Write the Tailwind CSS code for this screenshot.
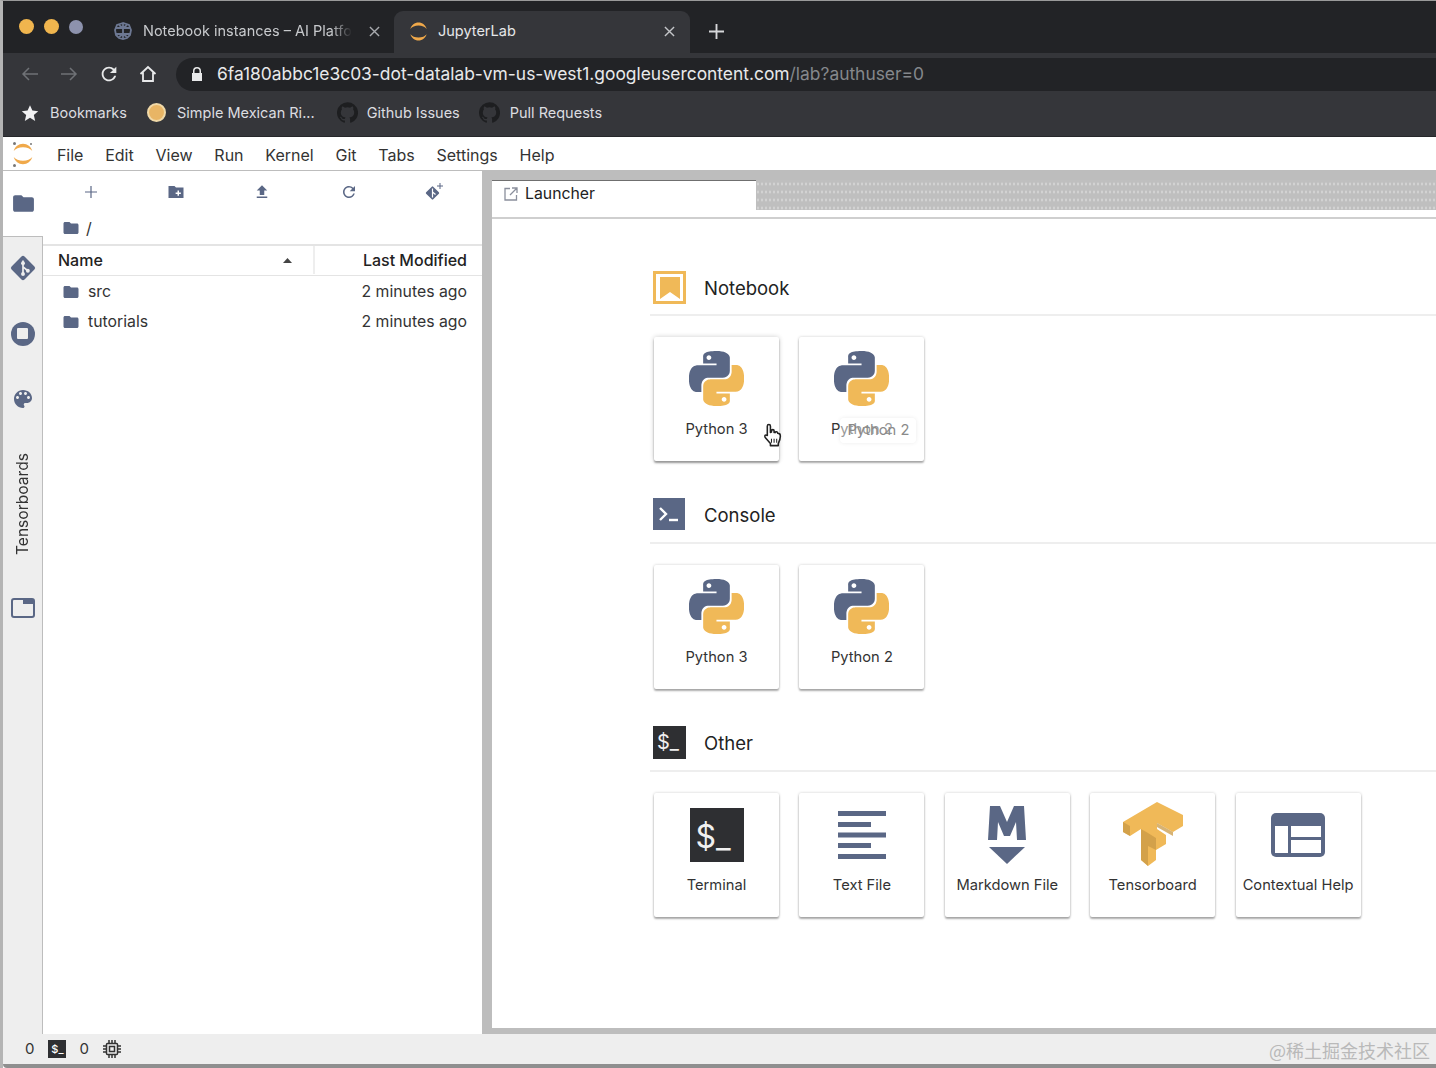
<!DOCTYPE html>
<html lang="en">
<head>
  <meta charset="UTF-8">
  <title>JupyterLab</title>
  <script src="https://cdn.jsdelivr.net/npm/@tailwindcss/browser@4"></script>
</head>
<body class="[font-family:Inter,sans-serif] text-[#222]">

  <!-- shared icons -->
  <svg class="hidden" xmlns="http://www.w3.org/2000/svg">
    <symbol id="folder" viewBox="0 0 24 24"><path d="M10 4H4c-1.1 0-2 .9-2 2v12c0 1.1.9 2 2 2h16c1.1 0 2-.9 2-2V8c0-1.1-.9-2-2-2h-8l-2-2z"/></symbol>
    <symbol id="python" viewBox="0 0 24 24">
      <path fill="#5a6785" d="M14.25.18l.9.2.73.26.59.3.45.32.34.34.25.34.16.33.1.3.04.26.02.2-.01.13V8.5l-.05.63-.13.55-.21.46-.26.38-.3.31-.33.25-.35.19-.35.14-.33.1-.3.07-.26.04-.21.02H8.77l-.69.05-.59.14-.5.22-.41.27-.33.32-.27.35-.2.36-.15.37-.1.35-.07.32-.04.27-.02.21v3.06H3.17l-.21-.03-.28-.07-.32-.12-.35-.18-.36-.26-.36-.36-.35-.46-.32-.59-.28-.73-.21-.88-.14-1.05-.05-1.23.06-1.22.16-1.04.24-.87.32-.71.36-.57.4-.44.42-.33.42-.24.4-.16.36-.1.32-.05.24-.01h.16l.06.01h8.16v-.83H6.18l-.01-2.75-.02-.37.05-.34.11-.31.17-.28.25-.26.31-.23.38-.2.44-.18.51-.15.58-.12.64-.1.71-.06.77-.04.84-.02 1.27.05zm-6.3 1.98l-.23.33-.08.41.08.41.23.34.33.22.41.09.41-.09.33-.22.23-.34.08-.41-.08-.41-.23-.33-.33-.22-.41-.09-.41.09z"/>
      <path fill="#f0b958" d="M21.04 6.11l.28.06.32.12.35.18.36.27.36.35.35.47.32.59.28.73.21.88.14 1.04.05 1.23-.06 1.23-.16 1.04-.24.86-.32.71-.36.57-.4.45-.42.33-.42.24-.4.16-.36.09-.32.05-.24.02-.16-.01h-8.22v.82h5.84l.01 2.76.02.36-.05.34-.11.31-.17.29-.25.25-.31.24-.38.2-.44.17-.51.15-.58.13-.64.09-.71.07-.77.04-.84.01-1.27-.04-1.07-.14-.9-.2-.73-.25-.59-.3-.45-.33-.34-.34-.25-.34-.16-.33-.1-.3-.04-.25-.02-.2.01-.13v-5.34l.05-.64.13-.54.21-.46.26-.38.3-.32.33-.24.35-.2.35-.14.33-.1.3-.06.26-.04.21-.02.13-.01h5.84l.69-.05.59-.14.5-.21.41-.28.33-.32.27-.35.2-.36.15-.36.1-.35.07-.32.04-.28.02-.21V6.07h2.09l.14.01zm-6.47 14.25l-.23.33-.08.41.08.41.23.33.33.23.41.08.41-.08.33-.23.23-.33.08-.41-.08-.41-.23-.33-.33-.23-.41-.08-.41.08z"/>
    </symbol>
    <symbol id="github" viewBox="0 0 24 24"><path d="M12 .3a12 12 0 0 0-3.8 23.38c.6.12.83-.26.83-.57v-2.02c-3.34.72-4.04-1.61-4.04-1.61-.55-1.39-1.33-1.76-1.33-1.76-1.09-.74.08-.73.08-.73 1.2.09 1.84 1.24 1.84 1.24 1.07 1.83 2.81 1.3 3.5 1 .1-.78.42-1.31.76-1.61-2.67-.3-5.47-1.33-5.47-5.93 0-1.31.47-2.38 1.24-3.22-.14-.3-.54-1.52.1-3.18 0 0 1-.32 3.3 1.23a11.5 11.5 0 0 1 6 0c2.28-1.55 3.29-1.23 3.29-1.23.64 1.66.24 2.88.12 3.18a4.65 4.65 0 0 1 1.23 3.22c0 4.61-2.8 5.63-5.48 5.92.42.36.81 1.1.81 2.22v3.29c0 .32.22.69.83.57A12 12 0 0 0 12 .3"/></symbol>
    <symbol id="jupyter" viewBox="0 0 24 24">
      <path fill="#f0a94a" d="M12 5.2c-4 0-7.6 1.5-9.3 3.8C3.9 4.8 7.6 1.8 12 1.8s8.100 3 9.300 7.200C19.600 6.700 16 5.200 12 5.200z"/>
      <path fill="#f0a94a" d="M12 18.800c4 0 7.600-1.500 9.300-3.800-1.200 4.200-4.900 7.200-9.300 7.200s-8.100-3-9.300-7.200c1.700 2.300 5.300 3.800 9.300 3.800z"/>
    </symbol>
  </svg>

  <div class="w-[1436px] h-[1068px] overflow-hidden flex flex-col border-l-[3px] border-t border-l-[#b4b4b4] border-t-[#9a9a9a] bg-white">

    <!-- Tab strip -->
    <div class="h-[52px] shrink-0 bg-[#222326] flex items-end text-[14.500px] text-[#c8cacd]">
      <div class="flex gap-[10px] items-center w-[105px] h-full pb-[1px] pl-[16px]">
        <span class="w-[15px] h-[15px] rounded-full bg-[#f0b54e]"></span>
        <span class="w-[15px] h-[15px] rounded-full bg-[#f0b54e]"></span>
        <span class="w-[14px] h-[14px] rounded-full bg-[#8d92ad]"></span>
      </div>
      <div class="w-[286px] h-[42px] flex items-center pl-[5px] pr-[14px] pb-[2px]">
        <svg class="w-[20px] h-[20px] mr-[10px] shrink-0" viewBox="0 0 20 20" fill="none" stroke="#6d7893" stroke-width="1.800">
          <path d="M10 2L4 4 2 9l1 5 3 3 4 1 4-1 3-3 1-5-2-5z"/><path d="M10 2v16M3 7h14M3 13h14M6 4l4 3 4-3M6 16l4-3 4 3"/>
        </svg>
        <span class="whitespace-nowrap [mask-image:linear-gradient(to_right,black_90%,transparent)]">Notebook instances – AI Platfo</span>
        <svg class="w-[11px] h-[11px] ml-auto" viewBox="0 0 12 12" stroke="#a8aaae" stroke-width="1.500"><path d="M1 1l10 10M11 1L1 11"/></svg>
      </div>
      <div class="w-[296px] h-[42px] bg-[#35363a] rounded-t-[9px] flex items-center pl-[14px] pr-[15px] pb-[2px] text-[#e6e7e9]">
        <svg class="w-[21px] h-[21px] mr-[9px] shrink-0"><use href="#jupyter"/></svg>
        <span>JupyterLab</span>
        <svg class="w-[11px] h-[11px] ml-auto" viewBox="0 0 12 12" stroke="#c4c6c9" stroke-width="1.500"><path d="M1 1l10 10M11 1L1 11"/></svg>
      </div>
      <div class="h-[42px] flex items-center pl-[19px] pb-[2px]">
        <svg class="w-[15px] h-[15px]" viewBox="0 0 16 16" stroke="#d6d7d9" stroke-width="2"><path d="M8 0v16M0 8h16"/></svg>
      </div>
    </div>

    <!-- Address bar -->
    <div class="h-[42px] shrink-0 bg-[#35363a] flex items-center">
      <svg class="w-[18px] h-[18px] ml-[18px]" viewBox="0 0 18 18" fill="none" stroke="#6f7276" stroke-width="1.500"><path d="M17 9H2M8 3L2 9l6 6"/></svg>
      <svg class="w-[18px] h-[18px] ml-[21px]" viewBox="0 0 18 18" fill="none" stroke="#6f7276" stroke-width="1.500"><path d="M1 9h15M10 3l6 6-6 6"/></svg>
      <svg class="w-[22px] h-[22px] ml-[20px]" viewBox="0 0 24 24" fill="#e8e9ea"><path d="M17.650 6.350A7.958 7.958 0 0012 4c-4.420 0-7.990 3.580-7.990 8s3.570 8 7.990 8c3.730 0 6.840-2.550 7.730-6h-2.080A5.990 5.990 0 0112 18c-3.310 0-6-2.690-6-6s2.690-6 6-6c1.660 0 3.140.690 4.220 1.780L13 11h7V4l-2.350 2.350z"/></svg>
      <svg class="w-[18px] h-[18px] ml-[19px]" viewBox="0 0 18 18" fill="none" stroke="#e8e9ea" stroke-width="1.800"><path d="M1.500 9L9 2l7.500 7M4 7.500V16h10V7.500"/></svg>
      <div class="ml-[19px] flex-1 h-[33px] bg-[#222326] rounded-l-full flex items-center pl-[15px] text-[17.400px] whitespace-nowrap">
        <svg class="w-[12px] h-[14px] mr-[14px]" viewBox="0 0 12 14" fill="#e8e9ea"><path d="M2 6V4a4 4 0 018 0v2h1v8H1V6zm1.500 0h5V4a2.500 2.500 0 00-5 0z"/></svg>
        <span class="text-[#e8e9ea]">6fa180abbc1e3c03-dot-datalab-vm-us-west1.googleusercontent.com</span><span class="text-[#85888c]">/lab?authuser=0</span>
      </div>
    </div>

    <!-- Bookmarks -->
    <div class="h-[42px] shrink-0 bg-[#35363a] flex items-center pb-[6px] text-[14.500px] text-[#dcdde0] border-b border-[#26272a]">
      <svg class="w-[18px] h-[18px] ml-[18px] mr-[11px]" viewBox="0 0 24 24" fill="#f1f1f2"><path d="M12 1.500l3.200 7.300 7.800.8-5.900 5.200 1.800 7.700L12 18.400l-6.900 4.100 1.800-7.700L1 9.600l7.800-.8z"/></svg>
      <span>Bookmarks</span>
      <span class="w-[19px] h-[19px] rounded-full bg-[#e8b565] border-2 border-[#f0d9a8] ml-[20px] mr-[11px]"></span>
      <span>Simple Mexican Ri...</span>
      <svg class="w-[21px] h-[21px] ml-[22px] mr-[9px] fill-[#1d1e20]"><use href="#github"/></svg>
      <span>Github Issues</span>
      <svg class="w-[21px] h-[21px] ml-[19px] mr-[10px] fill-[#1d1e20]"><use href="#github"/></svg>
      <span>Pull Requests</span>
    </div>

    <!-- Jupyter menu -->
    <div class="h-[34px] shrink-0 flex items-center text-[16px] text-[#333] border-b border-[#bdbdbd]">
      <div class="relative w-[43px] h-full flex items-center pl-[8px]">
        <svg class="w-[24px] h-[26px]"><use href="#jupyter"/></svg>
        <span class="absolute left-[10px] top-[5px] w-[3px] h-[3px] rounded-full bg-[#777]"></span>
        <span class="absolute left-[27px] top-[6px] w-[2px] h-[2px] rounded-full bg-[#777]"></span>
        <span class="absolute left-[10px] bottom-[3px] w-[3px] h-[3px] rounded-full bg-[#777]"></span>
      </div>
      <div class="flex pt-[3px]">
        <span class="px-[10.900px]">File</span><span class="px-[10.900px]">Edit</span><span class="px-[10.900px]">View</span><span class="px-[10.900px]">Run</span><span class="px-[10.900px]">Kernel</span><span class="px-[10.900px]">Git</span><span class="px-[10.900px]">Tabs</span><span class="px-[10.900px]">Settings</span><span class="px-[10.900px]">Help</span>
      </div>
    </div>

    <!-- Main area -->
    <div class="flex-1 min-h-0 flex bg-[#bdbdbd]">

      <!-- Side tabs -->
      <div class="w-[40px] shrink-0 bg-[#eeeeee] flex flex-col items-stretch fill-[#5a6785]">
        <div class="h-[65px] bg-white flex items-center justify-center">
          <svg class="w-[25px] h-[25px]"><use href="#folder"/></svg>
        </div>
        <div class="flex-1 flex flex-col border-r border-t border-[#bdbdbd]">
          <div class="h-[65px] flex items-center justify-center pb-[3px]">
            <svg class="w-[28px] h-[28px]" viewBox="0 0 26 26">
              <rect x="4.500" y="4.500" width="17" height="17" rx="2" transform="rotate(45 13 13)"/>
              <path d="M13 6v14M13 12l5 4" stroke="#eee" stroke-width="1.600" fill="none"/>
              <circle cx="13" cy="8.500" r="1.800" fill="#eee"/><circle cx="13" cy="18.500" r="1.800" fill="#eee"/><circle cx="17.500" cy="15.500" r="1.800" fill="#eee"/>
            </svg>
          </div>
          <div class="h-[65px] flex items-center justify-center pb-[2px]">
            <span class="w-[24px] h-[24px] rounded-full bg-[#5a6785] flex items-center justify-center"><span class="w-[11px] h-[11px] rounded-[1px] bg-[#eee]"></span></span>
          </div>
          <div class="h-[65px] flex items-center justify-center pb-[2px]">
            <svg class="w-[24px] h-[24px]" viewBox="0 0 24 24"><path d="M12 3c-4.970 0-9 4.030-9 9s4.030 9 9 9c.830 0 1.500-.670 1.500-1.500 0-.390-.150-.740-.390-1.010-.230-.260-.380-.610-.380-.990 0-.830.670-1.500 1.500-1.500H16c2.760 0 5-2.240 5-5 0-4.420-4.030-8-9-8zm-5.500 9c-.830 0-1.500-.670-1.500-1.500S5.670 9 6.500 9 8 9.670 8 10.500 7.330 12 6.500 12zm3-4C8.670 8 8 7.330 8 6.500S8.670 5 9.500 5s1.500.670 1.500 1.500S10.330 8 9.500 8zm5 0c-.830 0-1.500-.670-1.500-1.500S13.670 5 14.500 5s1.500.670 1.500 1.500S15.330 8 14.500 8zm3 4c-.830 0-1.500-.670-1.500-1.500S16.670 9 17.500 9s1.500.670 1.500 1.500-.670 1.500-1.500 1.500z"/></svg>
          </div>
          <div class="py-[21px] flex justify-center">
            <span class="[writing-mode:vertical-rl] rotate-180 text-[15.600px] leading-[20px] text-[#333]">Tensorboards</span>
          </div>
          <div class="h-[65px] flex items-center justify-center pb-[2px]">
            <svg class="w-[24px] h-[20px]" viewBox="0 0 24 20"><rect x="1" y="1" width="22" height="18" rx="2" fill="none" stroke="#5a6785" stroke-width="2"/><rect x="12" y="1" width="11" height="5"/></svg>
          </div>
        </div>
      </div>

      <!-- File browser -->
      <div class="w-[439px] shrink-0 bg-white flex flex-col text-[15.800px] text-[#333]">
        <div class="h-[41px] flex items-center px-[5px] fill-[#5a6785]">
          <div class="flex-1 flex justify-center"><svg class="w-[12px] h-[12px]" viewBox="0 0 12 12" stroke="#5a6785" stroke-width="1.200"><path d="M6 0v12M0 6h12"/></svg></div>
          <div class="flex-1 flex justify-center">
            <svg class="w-[18px] h-[18px]" viewBox="0 0 24 24"><path fill-rule="evenodd" d="M10 4H2v16h20V6H12zM14 10h2v2.500h2.500v2H16V17h-2v-2.500h-2.500v-2H14z"/></svg>
          </div>
          <div class="flex-1 flex justify-center"><svg class="w-[18px] h-[18px]" viewBox="0 0 24 24"><path d="M9 16h6v-6h4l-7-7-7 7h4zm-4 2h14v2H5z"/></svg></div>
          <div class="flex-1 flex justify-center pl-[2px]"><svg class="w-[18px] h-[18px]" viewBox="0 0 24 24"><path d="M17.650 6.350A7.958 7.958 0 0012 4c-4.420 0-7.990 3.580-7.990 8s3.570 8 7.990 8c3.730 0 6.840-2.550 7.730-6h-2.080A5.990 5.990 0 0112 18c-3.310 0-6-2.690-6-6s2.690-6 6-6c1.660 0 3.140.690 4.220 1.780L13 11h7V4l-2.350 2.350z"/></svg></div>
          <div class="flex-1 flex justify-center">
            <svg class="w-[20px] h-[20px]" viewBox="0 0 20 20"><rect x="3.500" y="6" width="10" height="10" rx="1" transform="rotate(45 8.500 11)"/><path d="M8.500 6.500v9M8.500 10l3 2.500" stroke="#fff" stroke-width="1.200"/><path d="M16 1v6M13 4h6" stroke="#5a6785" stroke-width="1"/></svg>
          </div>
        </div>
        <div class="h-[32px] flex items-center pl-[19px] fill-[#5a6785] text-[16px]">
          <svg class="w-[18px] h-[18px] mr-[6px]"><use href="#folder"/></svg><span>/</span>
        </div>
        <div class="h-[32px] flex items-center pb-[1px] border-t-2 border-b border-[#e4e4e4] font-medium text-[16px] text-[#222]">
          <div class="w-[272px] h-full flex items-center justify-between pl-[15px] pr-[21px] border-r-2 border-[#eeeeee]">
            <span>Name</span>
            <svg class="w-[9px] h-[5px]" viewBox="0 0 9 5" fill="#444"><path d="M4.500 0L9 5H0z"/></svg>
          </div>
          <div class="flex-1 text-right pr-[15px]">Last Modified</div>
        </div>
        <div class="h-[30px] flex items-center pt-[1px] pl-[19px] pr-[15px] fill-[#5a6785]">
          <svg class="w-[18px] h-[18px] mr-[8px]"><use href="#folder"/></svg><span>src</span><span class="ml-auto">2 minutes ago</span>
        </div>
        <div class="h-[30px] flex items-center pt-[1px] pl-[19px] pr-[15px] fill-[#5a6785]">
          <svg class="w-[18px] h-[18px] mr-[8px]"><use href="#folder"/></svg><span>tutorials</span><span class="ml-auto">2 minutes ago</span>
        </div>
      </div>

      <!-- Launcher dock -->
      <div class="flex-1 min-w-0 pl-[10px] pb-[6px] flex flex-col">
        <div class="h-[48px] shrink-0 flex flex-col bg-white border-b-2 border-[#cfcfcf]">
          <div class="h-[9px] bg-[#bdbdbd]"></div>
          <div class="flex-1 flex min-h-0">
            <div class="w-[264px] border-t border-[#6f6f6f] flex items-center pl-[12px] text-[15.800px] pb-[11px] bg-white">
              <svg class="w-[14px] h-[14px] mr-[7px]" viewBox="0 0 14 14" fill="none" stroke="#8a8f9c" stroke-width="1.300"><path d="M6 1.500H1v11.500h11.500V8M8 1h5v5M13 1L6 8"/></svg>
              <span>Launcher</span>
            </div>
            <div class="flex-1 h-[30px] bg-[#bfbfbf] bg-[radial-gradient(#d2d2d2_0.7px,transparent_1px)] bg-[size:4px_8px]"></div>
          </div>
        </div>

        <div class="flex-1 min-h-0 bg-white pl-[158px] pt-[52px] overflow-hidden text-[14.700px] text-[#333]">

          <!-- Notebook -->
          <section class="mb-[38px]">
            <div class="h-[45px] flex items-start pl-[3px] border-b-2 border-[#eeeeee]">
              <div class="w-[33px] h-[33px] border-[3px] border-[#f0b958] flex items-center justify-center">
                <svg class="w-[20px] h-[22px]" viewBox="0 0 20 22" fill="#f0b958"><path d="M0 0h20v22l-10-7-10 7z"/></svg>
              </div>
              <h2 class="ml-[18px] text-[18.500px] leading-[34px] text-[#222]">Notebook</h2>
            </div>
            <div class="flex gap-[20.400px] mt-[21px] pl-[4px]">
              <div class="relative w-[125px] h-[124px] bg-white rounded-[2px] shadow-[0_2px_2px_rgba(0,0,0,0.35),0_0_5px_rgba(0,0,0,0.2)] flex flex-col items-center">
                <div class="h-[83px] w-full flex items-center justify-center"><svg class="w-[55px] h-[57px]"><use href="#python"/></svg></div>
                <span class="leading-[18px]">Python 3</span>
                <svg class="absolute left-[108px] top-[86px] w-[20px] h-[24px]" viewBox="0 0 19 23" fill="#fff" stroke="#222" stroke-width="1.500" stroke-linejoin="round">
                  <path d="M5 11V3a1.500 1.500 0 013 0v6l1-.3V7.500c0-1.500 2.500-1.500 2.500 0V9l1 .2c.3-1.200 2.500-1 2.500.6l1 .4c1.500 0 1.500 1 1.500 2.500 0 3-1 5-2 7v2H8v-2L3 14c-1-2 0-3 2-2z"/>
                  <path d="M9 15v4M11.500 15v4M14 15v4" stroke-width="1"/>
                </svg>
              </div>
              <div class="relative w-[125px] h-[124px] bg-white rounded-[2px] shadow-[0_2px_2px_rgba(0,0,0,0.3),0_0_3px_rgba(0,0,0,0.2)] flex flex-col items-center">
                <div class="h-[83px] w-full flex items-center justify-center"><svg class="w-[55px] h-[57px]"><use href="#python"/></svg></div>
                <span class="leading-[18px]">Python 2</span>
                <span class="absolute left-[41px] top-[81px] w-[76px] h-[25px] rounded-[4px] bg-white/50 shadow-[0_0_4px_rgba(0,0,0,0.08)] text-[#8a8a8a] flex items-center justify-center">Python 2</span>
              </div>
            </div>
          </section>

          <!-- Console -->
          <section class="mb-[38px]">
            <div class="h-[45px] flex items-start pl-[3px] border-b-2 border-[#eeeeee]">
              <div class="w-[32px] h-[32px] -mt-[1px] bg-[#5a6785]">
                <svg class="w-[32px] h-[32px]" viewBox="0 0 32 32" fill="none" stroke="#fff" stroke-width="2.400"><path d="M7 10l6 6-6 6"/><path d="M16 22h9"/></svg>
              </div>
              <h2 class="ml-[19px] -mt-[1px] text-[18.500px] leading-[34px] text-[#222]">Console</h2>
            </div>
            <div class="flex gap-[20.400px] mt-[21px] pl-[4px]">
              <div class="w-[125px] h-[124px] bg-white rounded-[2px] shadow-[0_2px_2px_rgba(0,0,0,0.3),0_0_3px_rgba(0,0,0,0.2)] flex flex-col items-center">
                <div class="h-[83px] w-full flex items-center justify-center"><svg class="w-[55px] h-[57px]"><use href="#python"/></svg></div>
                <span class="leading-[18px]">Python 3</span>
              </div>
              <div class="w-[125px] h-[124px] bg-white rounded-[2px] shadow-[0_2px_2px_rgba(0,0,0,0.3),0_0_3px_rgba(0,0,0,0.2)] flex flex-col items-center">
                <div class="h-[83px] w-full flex items-center justify-center"><svg class="w-[55px] h-[57px]"><use href="#python"/></svg></div>
                <span class="leading-[18px]">Python 2</span>
              </div>
            </div>
          </section>

          <!-- Other -->
          <section>
            <div class="h-[45px] flex items-start pl-[3px] border-b-2 border-[#eeeeee]">
              <div class="w-[33px] h-[33px] -mt-[1px] bg-[#2e2f32] text-[#f0f0f0] text-[20px] leading-[33px] pl-[4px] whitespace-nowrap">$_</div>
              <h2 class="ml-[18px] -mt-[1px] text-[18.500px] leading-[34px] text-[#222]">Other</h2>
            </div>
            <div class="flex gap-[20.400px] mt-[21px] pl-[4px]">
              <div class="w-[125px] h-[124px] bg-white rounded-[2px] shadow-[0_2px_2px_rgba(0,0,0,0.3),0_0_3px_rgba(0,0,0,0.2)] flex flex-col items-center">
                <div class="h-[83px] w-full flex items-center justify-center">
                  <div class="w-[54px] h-[54px] bg-[#2e2f32] text-[#f0f0f0] text-[32px] leading-[58px] pl-[6px] whitespace-nowrap">$_</div>
                </div>
                <span class="leading-[18px]">Terminal</span>
              </div>
              <div class="w-[125px] h-[124px] bg-white rounded-[2px] shadow-[0_2px_2px_rgba(0,0,0,0.3),0_0_3px_rgba(0,0,0,0.2)] flex flex-col items-center">
                <div class="h-[83px] w-full flex items-center justify-center">
                  <svg class="w-[50px] h-[48px]" viewBox="0 0 50 48" fill="#5a6785"><path d="M1 0h48v5H1zM1 11h33v5H1zM1 21.500h48v5H1zM1 32h33v5H1zM1 43h48v5H1z"/></svg>
                </div>
                <span class="leading-[18px]">Text File</span>
              </div>
              <div class="w-[125px] h-[124px] bg-white rounded-[2px] shadow-[0_2px_2px_rgba(0,0,0,0.3),0_0_3px_rgba(0,0,0,0.2)] flex flex-col items-center">
                <div class="h-[83px] w-full flex items-center justify-center">
                  <svg class="w-[38px] h-[58px]" viewBox="0 0 38 58" fill="#5a6785"><path d="M2 0h10l7 16 7-16h10l2 34h-9l-1-18-6 14h-6L10 16 9 34H0z"/><path d="M1 41h36L19 58z"/></svg>
                </div>
                <span class="leading-[18px]">Markdown File</span>
              </div>
              <div class="w-[125px] h-[124px] bg-white rounded-[2px] shadow-[0_2px_2px_rgba(0,0,0,0.3),0_0_3px_rgba(0,0,0,0.2)] flex flex-col items-center">
                <div class="h-[83px] w-full flex items-center justify-center">
                  <svg class="w-[62px] h-[65px]" viewBox="0 0 62 65">
                    <path fill="#f0b958" d="M35 0L1 20v10l7 4 11-7v31l7 6 8-6V48l10-6v-9l-9-6v-6l16 9 10-6V13z"/>
                    <path fill="#c99a45" opacity=".75" d="M35 21l16 9v4l-16-9zM19 27l7 4v33l-7-6zM1 20l7 4v10l-7-4zM26 31l8 5v12l-8-4z"/>
                  </svg>
                </div>
                <span class="leading-[18px]">Tensorboard</span>
              </div>
              <div class="w-[125px] h-[124px] bg-white rounded-[2px] shadow-[0_2px_2px_rgba(0,0,0,0.3),0_0_3px_rgba(0,0,0,0.2)] flex flex-col items-center">
                <div class="h-[83px] w-full flex items-center justify-center">
                  <svg class="w-[54px] h-[44px]" viewBox="0 0 54 44"><rect width="54" height="44" rx="5" fill="#5a6785"/><path fill="#fff" d="M4 13h13v27H4zM20 13h30v11H20zM20 27h30v13H20z"/></svg>
                </div>
                <span class="leading-[18px]">Contextual Help</span>
              </div>
            </div>
          </section>
        </div>
      </div>
    </div>

    <!-- Status bar -->
    <div class="h-[30px] shrink-0 bg-[#eeeeee] flex items-center pl-[22px] pr-[6px] text-[15px] text-[#333]">
      <span>0</span>
      <span class="ml-[14px] w-[18px] h-[18px] bg-[#2e2f32] text-white text-[11px] leading-[19px] text-center font-medium">$_</span>
      <span class="ml-[13px]">0</span>
      <svg class="ml-[14px] w-[18px] h-[18px]" viewBox="0 0 18 18" fill="none" stroke="#333" stroke-width="1.500"><rect x="3.500" y="3.500" width="11" height="11" rx="1"/><rect x="6.500" y="6.500" width="5" height="5"/><path d="M6 0v3M9 0v3M12 0v3M6 15v3M9 15v3M12 15v3M0 6h3M0 9h3M0 12h3M15 6h3M15 9h3M15 12h3"/></svg>
      <span class="ml-auto pt-[2px] text-[18px] text-[#b9b9b9] [font-family:'Noto_Sans_CJK_SC',sans-serif]">@稀土掘金技术社区</span>
    </div>
    <div class="h-[4px] shrink-0 bg-[#8f8f8f] rounded-bl-[6px]"></div>
  </div>
</body>
</html>
